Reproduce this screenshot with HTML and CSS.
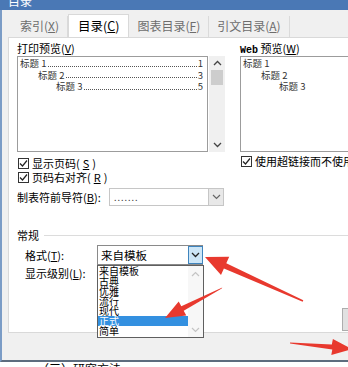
FILE: index.html
```html
<!DOCTYPE html>
<html>
<head>
  <meta charset="UTF-8">
  <title>目录</title>
  <link rel="stylesheet" href="styles.css">
</head>
<body>

<div class="window">
  <!-- Title bar (cut off at the top of the shot) -->
  <div class="titlebar"><span>目录</span></div>

  <div class="dialog">
    <div class="tabs">
      <div class="tab">索引(<u>X</u>)</div>
      <div class="tab active">目录(<u>C</u>)</div>
      <div class="tab">图表目录(<u>F</u>)</div>
      <div class="tab">引文目录(<u>A</u>)</div>
    </div>

    <div class="panel">
      <div class="top">
        <!-- Print preview column -->
        <div class="col-left">
          <div class="label">打印预览(<u>V</u>)</div>
          <div class="preview-wrap">
            <div class="preview">
              <div class="toc-line"><span>标题 1</span><span class="dots"></span><span>1</span></div>
              <div class="toc-line lvl2"><span>标题 2</span><span class="dots"></span><span>3</span></div>
              <div class="toc-line lvl3"><span>标题 3</span><span class="dots"></span><span>5</span></div>
            </div>
            <div class="vscroll">
              <span class="chev"><svg width="9" height="6"><polyline points="1,5 4.5,1.5 8,5" fill="none" stroke="#444" stroke-width="1.3"/></svg></span>
              <span class="thumb"></span>
              <span class="spacer"></span>
              <span class="chev"><svg width="9" height="6"><polyline points="1,1 4.5,4.5 8,1" fill="none" stroke="#444" stroke-width="1.3"/></svg></span>
            </div>
          </div>
          <div class="check first"><span class="box"><svg width="9" height="9"><polyline points="1,4.5 3.5,7 8,1.5" fill="none" stroke="#222" stroke-width="1.2"/></svg></span>显示页码(<u>S</u>)</div>
          <div class="check"><span class="box"><svg width="9" height="9"><polyline points="1,4.5 3.5,7 8,1.5" fill="none" stroke="#222" stroke-width="1.2"/></svg></span>页码右对齐(<u>R</u>)</div>
          <div class="field-row">
            <span class="field-label">制表符前导符(<u>B</u>):</span>
            <div class="combo leader">
              <span class="leader-dots">. . . . . . .</span>
              <span class="drop"><svg width="9" height="6"><polyline points="1,1 4.5,4.5 8,1" fill="none" stroke="#666" stroke-width="1.2"/></svg></span>
            </div>
          </div>
        </div>

        <div class="vsep"></div>

        <!-- Web preview column -->
        <div class="col-right">
          <div class="label"><span class="web">Web</span> 预览(<u>W</u>)</div>
          <div class="preview web-preview">
            <div class="toc-line"><span>标题 1</span></div>
            <div class="toc-line lvl2"><span>标题 2</span></div>
            <div class="toc-line lvl3"><span>标题 3</span></div>
          </div>
          <div class="check web-check"><span class="box"><svg width="9" height="9"><polyline points="1,4.5 3.5,7 8,1.5" fill="none" stroke="#222" stroke-width="1.2"/></svg></span>使用超链接而不使用页码</div>
        </div>
      </div>

      <div class="group">常规<span class="group-line"></span></div>

      <div class="form-row first">
        <span class="form-label">格式(<u>T</u>):</span>
        <div class="combo format">
          <span>来自模板</span>
          <span class="drop active"><svg width="9" height="6"><polyline points="1,1 4.5,4.5 8,1" fill="none" stroke="#222" stroke-width="1.3"/></svg></span>
        </div>
      </div>
      <div class="form-row second">
        <span class="form-label">显示级别(<u>L</u>):</span>
      </div>

      <!-- Open dropdown list -->
      <div class="dropdown">
        <ul class="options">
          <li>来自模板</li>
          <li>古典</li>
          <li>优雅</li>
          <li>流行</li>
          <li>现代</li>
          <li class="selected">正式</li>
          <li>简单</li>
        </ul>
        <div class="list-scroll">
          <svg width="9" height="6"><polyline points="1,5 4.5,1.5 8,5" fill="none" stroke="#c4c4c4" stroke-width="1.2"/></svg>
          <svg width="9" height="6"><polyline points="1,1 4.5,4.5 8,1" fill="none" stroke="#c4c4c4" stroke-width="1.2"/></svg>
        </div>
      </div>

      <div class="edge-btn"></div>
    </div>

    <div class="footer"></div>
  </div>

  <div class="doc">（三）研究方法</div>

  <!-- Red annotation arrows -->
  <svg class="arrows" width="348" height="367" viewBox="0 0 348 367">
    <polygon fill="#e8392e" points="205,257 229.2,256.8 226.3,263.2 303.3,300.3 302.7,301.7 223.9,268.6 221,275"/>
    <polygon fill="#e8392e" points="165,318 178.7,301.5 181.3,306.3 222.3,287.5 221.7,288.5 183.7,310.7 186.3,315.5"/>
    <polygon fill="#e8392e" points="352,349 331.3,355.1 332.3,349.6 290.1,343.6 289.9,342.4 331.8,344.6 332.9,339.1"/>
  </svg>
</div>

</body>
</html>
```

FILE: styles.css
```css
* {
  box-sizing: border-box;
}

body {
  margin: 0;
  background: #fff;
  font-family: "Noto Sans CJK SC", "Noto Sans", sans-serif;
  font-size: 11px;
  color: #000;
  overflow: hidden;
}

u {
  text-decoration: underline;
}

.window {
  position: relative;
  width: 348px;
  height: 367px;
  overflow: hidden;
}

/* Title bar */
.titlebar {
  height: 10px;
  background: #4a78b5;
  overflow: hidden;
  padding-left: 8px;
  color: #fff;
  font-size: 12px;
  line-height: 12px;
}

.titlebar span {
  display: block;
  margin-top: -5px;
}

.dialog {
  background: #f0f0f0;
  border-left: 2px solid #7b9cc6;
  border-bottom: 2px solid #5d6c7e;
  height: 352px;
}

/* Tabs */
.tabs {
  height: 27px;
  display: flex;
  align-items: flex-end;
  padding-left: 10px;
}

.tab {
  height: 21px;
  line-height: 20px;
  padding: 0 8px;
  font-size: 12px;
  color: #6d6d6d;
  border-right: 1px solid #dadada;
}

.tab.active {
  position: relative;
  height: 24px;
  line-height: 22px;
  padding: 0 9px;
  background: #fff;
  color: #000;
  border: 1px solid #d9d9d9;
  border-bottom: none;
  margin-bottom: -1px;
  font-size: 12.5px;
}

/* Tab panel */
.panel {
  position: relative;
  margin-left: 6px;
  height: 296px;
  background: #fff;
  border: 1px solid #d9d9d9;
  border-right: none;
  padding: 3px 0 0 8px;
}

.top {
  display: flex;
  height: 181px;
}

.col-left {
  width: 208px;
  flex: none;
}

.vsep {
  width: 1px;
  background: #cfcfcf;
  margin: 1px 8px 0 7px;
}

.col-right {
  flex: none;
  width: 130px;
}

.label {
  height: 15px;
  line-height: 15px;
}

.web {
  font-family: "Liberation Mono", monospace;
  font-weight: bold;
  font-size: 10px;
}

/* Preview boxes */
.preview-wrap {
  display: flex;
  height: 96px;
}

.preview {
  width: 192px;
  height: 96px;
  border: 1px solid #9c9c9c;
  padding: 1px 4px 0 2px;
  font-size: 9.5px;
  color: #333;
}

.web-preview {
  width: 130px;
}

.toc-line {
  display: flex;
  height: 11.5px;
  line-height: 11px;
  white-space: nowrap;
}

.toc-line.lvl2 {
  padding-left: 18px;
}

.toc-line.lvl3 {
  padding-left: 36px;
}

.dots {
  flex: 1;
  align-self: flex-end;
  margin: 0 1px 3px 2px;
  border-bottom: 1px dotted #555;
}

.vscroll {
  width: 16px;
  margin-left: 1px;
  background: #f0f0f0;
  display: flex;
  flex-direction: column;
  align-items: center;
}

.chev {
  height: 14px;
  display: flex;
  align-items: center;
}

.thumb {
  width: 12px;
  height: 15px;
  background: #cdcdcd;
}

.spacer {
  flex: 1;
}

/* Checkboxes */
.check {
  display: flex;
  align-items: center;
  gap: 3px;
  height: 14px;
  padding-left: 1px;
  white-space: nowrap;
}

.check.first {
  margin-top: 4px;
}

.web-check {
  margin-top: 2px;
}

.box {
  width: 11px;
  height: 11px;
  border: 1px solid #333;
  background: #fff;
  display: flex;
  align-items: center;
  justify-content: center;
}

/* Combo boxes */
.field-row {
  display: flex;
  align-items: center;
  height: 18px;
  margin-top: 4px;
}

.field-label {
  width: 92px;
}

.combo {
  display: flex;
  align-items: center;
  background: #fff;
}

.combo.leader {
  width: 115px;
  height: 18px;
  border: 1px solid #c6c6c6;
  padding-left: 4px;
  color: #444;
}

.leader-dots {
  font-size: 9px;
  letter-spacing: -0.5px;
}

.drop {
  margin-left: auto;
  width: 15px;
  height: 100%;
  display: flex;
  align-items: center;
  justify-content: center;
  background: #e8e8e8;
  border-left: 1px solid #c6c6c6;
}

.drop.active {
  background: #cde6f7;
  border: 1px solid #3f84bd;
}

.group {
  display: flex;
  align-items: center;
  gap: 5px;
  height: 14px;
  margin-top: 6px;
}

.group-line {
  flex: 1;
  height: 1px;
  background: #dcdcdc;
}

.form-row {
  display: flex;
  align-items: center;
  padding-left: 8px;
}

.form-row.first {
  height: 20px;
  margin-top: 3px;
}

.form-row.second {
  height: 12px;
  margin-top: 2px;
}

.form-label {
  width: 72px;
}

.combo.format {
  width: 106px;
  height: 20px;
  border: 1px solid #8a8a8a;
  border-right: none;
  padding-left: 3px;
  font-size: 11.5px;
}

/* Open list */
.dropdown {
  position: absolute;
  left: 88px;
  top: 227px;
  width: 107px;
  height: 73px;
  background: #fff;
  border: 1px solid #5f5f5f;
  display: flex;
}

.options {
  list-style: none;
  margin: 0;
  padding: 0;
  width: 90px;
}

.options li {
  height: 10px;
  line-height: 10px;
  padding-left: 1px;
  font-size: 10px;
  white-space: nowrap;
}

.options li.selected {
  background: #3390e0;
  color: #fff;
}

.list-scroll {
  flex: 1;
  display: flex;
  flex-direction: column;
  align-items: center;
  justify-content: space-between;
  padding: 5px 0 4px;
  background: #f7f7f7;
}

.edge-btn {
  position: absolute;
  left: 333px;
  top: 270px;
  width: 12px;
  height: 23px;
  background: #e1e1e1;
  border: 1px solid #adadad;
}

.footer {
  height: 27px;
}

/* Document text below the dialog */
.doc {
  padding-left: 37px;
  font-size: 12px;
  line-height: 14px;
  white-space: nowrap;
}

.arrows {
  position: absolute;
  left: 0;
  top: 0;
}
```
